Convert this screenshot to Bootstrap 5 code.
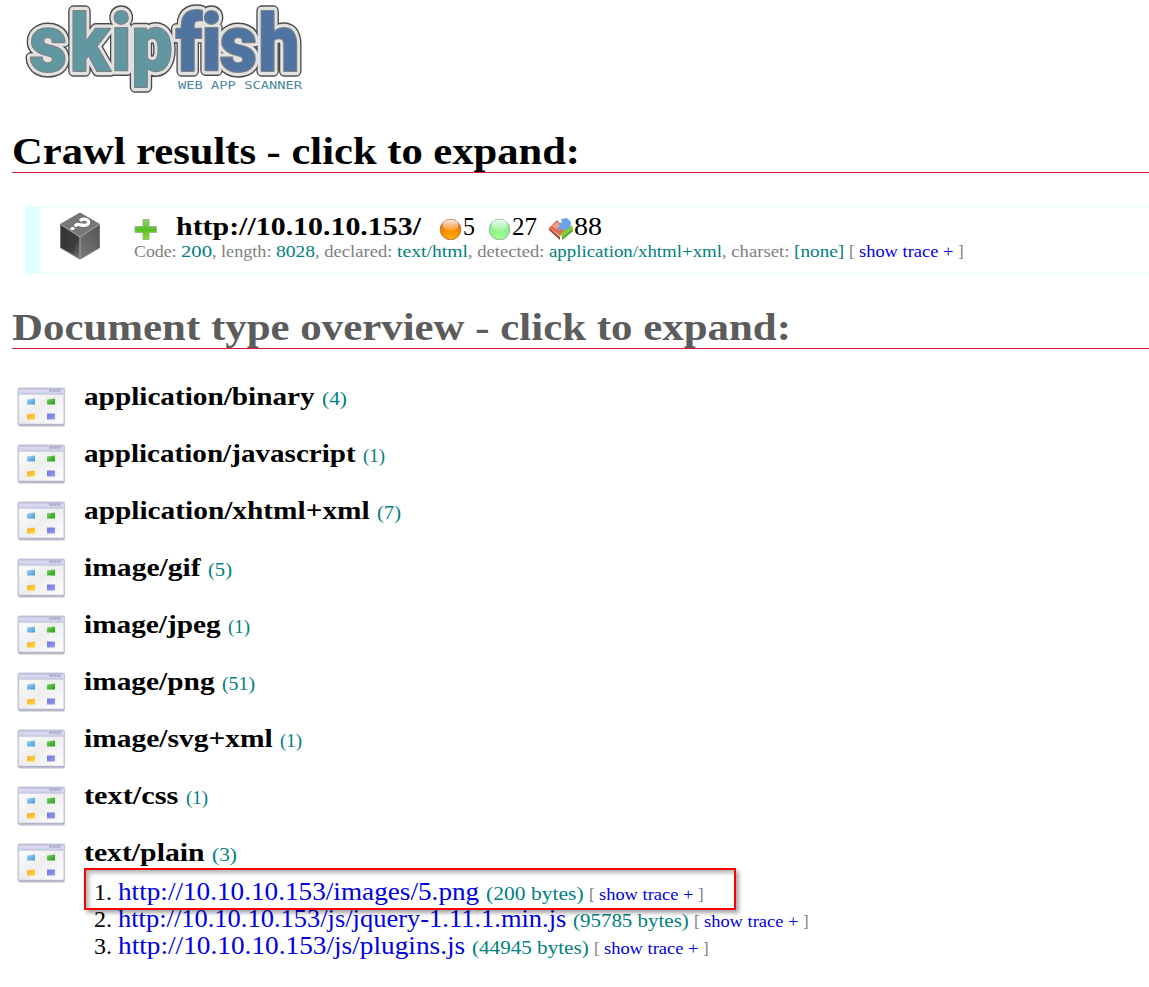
<!DOCTYPE html>
<html lang="en">
<head>
<meta charset="utf-8">
<title>Skipfish - scan results browser</title>
<link href="https://cdn.jsdelivr.net/npm/bootstrap@5.3.0/dist/css/bootstrap.min.css" rel="stylesheet">
<style>
body{font-family:Georgia,"Liberation Serif",serif;color:#000;background:#fff;overflow:hidden}
.fit{white-space:pre;display:inline-block;flex:none;transform-origin:0 50%}
.logo{display:block;margin-left:20px;overflow:visible}
.sect{font-size:37.5px;line-height:41px;height:42px;font-weight:700;margin:0 0 0 12px;border-bottom:1px solid crimson}
.sect.dim{color:#5c5c5c}
.target{margin:33px 0 0 25px;height:68px;border:1px solid #e0ffff;border-left-width:15px;border-right:0;padding:4px 0 0 18px}
.target-body{margin-left:32px}
.target-line{height:29px;line-height:31px;font-size:25px}
.meta{font-size:17px;line-height:22px;color:gray;margin-top:1px}
.val{color:teal}
.lnk{color:#0000e0;text-decoration:none}
.mime{height:57px;padding-left:17px}
.mime>svg{margin-top:5px;flex:none}
.mime-name{font-size:25px;line-height:30px;margin-left:18px}
.cnt{font-size:19px;color:teal}
.trace{font-size:17px;color:gray}
.docs{margin:-17px 0 0 84px}
.docs .doc{height:27px;line-height:27px;font-size:25px}
.num{width:28px;margin-right:6px;text-align:right;flex:none;font-size:24px}
.trace-link{font-size:17px}
.hl{left:0;top:-10px;width:652px;height:42px;z-index:2;border:2px solid #f00;box-shadow:3px 3px 4px rgba(0,0,0,.35),inset 3px 3px 4px rgba(0,0,0,.3)}
</style>
<script src="https://cdn.jsdelivr.net/npm/bootstrap@5.3.0/dist/js/bootstrap.bundle.min.js"></script>
</head>
<body>
<svg width="0" height="0" class="position-absolute" aria-hidden="true">
  <defs>
    <linearGradient id="pane" x1="0" y1="0" x2="1" y2="1"><stop offset="0" stop-color="#fff"/><stop offset=".5" stop-color="#eee"/><stop offset="1" stop-color="#fff"/></linearGradient>
    <linearGradient id="bar" x1="0" y1="0" x2="0" y2="1"><stop offset="0" stop-color="#b9b9d6"/><stop offset=".4" stop-color="#dcdcf4"/><stop offset="1" stop-color="#c3c3df"/></linearGradient>
    <linearGradient id="b1" x1="0" y1="0" x2="1" y2="1"><stop offset="0" stop-color="#a6d8f4"/><stop offset="1" stop-color="#3f97d6"/></linearGradient>
    <linearGradient id="b2" x1="0" y1="0" x2="1" y2="1"><stop offset="0" stop-color="#7ace68"/><stop offset="1" stop-color="#23a010"/></linearGradient>
    <linearGradient id="b3" x1="0" y1="0" x2="1" y2="1"><stop offset="0" stop-color="#f7a63a"/><stop offset="1" stop-color="#ffdc2c"/></linearGradient>
    <linearGradient id="b4" x1="0" y1="0" x2="1" y2="1"><stop offset="0" stop-color="#6c78d8"/><stop offset="1" stop-color="#9c9cf0"/></linearGradient>
    <symbol id="win" viewBox="0 0 49 41">
      <rect x="1.500" y="2" width="46.500" height="38" rx="2" fill="#777" opacity=".25"/>
      <rect x="1.300" y="1.300" width="46" height="37" rx="1.500" fill="url(#pane)" stroke="#c6c6d8" stroke-width="1.600"/>
      <rect x="2" y="1.300" width="44.600" height="6.400" fill="url(#bar)"/>
      <path d="M32 3.500h12" stroke="#b0b0d0" stroke-width="2.600" stroke-dasharray="3.500 .3"/>
      <path d="M2 37.600h45" stroke="#b2b2c8" stroke-width="1.600"/>
      <g><path d="M10 12.500l8-1v6h-8z" fill="url(#b1)"/><path d="M30 12.500l8-1v6h-8z" fill="url(#b2)"/><path d="M10 27.500l8-1v6h-8z" fill="url(#b3)"/><path d="M30 26.500h8v6h-8z" fill="url(#b4)"/></g>
    </symbol>
  </defs>
</svg>

<header>
<svg class="logo" width="300" height="100" viewBox="20 0 300 100">
  <defs>
    <g id="word" font-family="Roboto" font-weight="900" font-size="79"><text id="skip" x="32 76 121 143" y="71">skip</text><text id="fish" x="191 219 239 281" y="71">fish</text></g>
  </defs>
  <g transform="scale(.92 1)" stroke-linejoin="round">
    <use href="#word" fill="#4a4a4a" stroke="#4a4a4a" stroke-width="11.500"/>
    <use href="#word" fill="#e2e2e2" stroke="#e2e2e2" stroke-width="8.500"/>
    <use href="#word" fill="#777" stroke="#808080" stroke-width="2.200"/>
    <use href="#skip" font-family="Roboto" font-weight="900" font-size="79" fill="#6197a0"/>
    <use href="#fish" font-family="Roboto" font-weight="900" font-size="79" fill="#5074a2"/>
  </g>
  <text x="178" y="89" font-family="DejaVu Sans Mono" font-weight="400" font-size="10" textLength="124" lengthAdjust="spacingAndGlyphs" fill="#4b879d">WEB APP SCANNER</text>
</svg>
</header>

<h2 class="sect" style="margin-top:31px"><span class="fit" data-w="568">Crawl results - click to expand:</span></h2>

<section class="target d-flex">
  <svg width="44" height="50" viewBox="0 0 44 50" class="flex-shrink-0">
    <defs><linearGradient id="c1" x1="0" y1="0" x2="1" y2="1"><stop offset="0" stop-color="#333"/><stop offset=".65" stop-color="#3c3c3c"/><stop offset="1" stop-color="#777"/></linearGradient><linearGradient id="c2" x1="1" y1="0" x2="0" y2="1"><stop offset="0" stop-color="#555"/><stop offset="1" stop-color="#777"/></linearGradient></defs>
    <path d="M22 2.500L41 13.500v23L22 47.500 3 36.500v-23z" fill="#555" stroke="#777" stroke-width="2" stroke-linejoin="round"/>
    <path d="M22 2.500L41 13.500 22 26 3 13.500z" fill="#777"/>
    <path d="M3 14l19 12v21L3 36.500z" fill="url(#c1)"/><path d="M41 14L22 26v21l19-10.500z" fill="url(#c2)"/>
    <path d="M3 13.500L22 26l19-12.500M22 26v21" fill="none" stroke="#999" stroke-width="1.300"/>
    <path d="M22 10c3-3.500 9.500-1.500 8.500 2-1.500 4-6.500 2-9.500 1.500-2.500-.3-3.500 1-4 2" fill="none" stroke="#fff" stroke-width="3.200"/><ellipse cx="14.500" cy="17.500" rx="2.300" ry="1.600" fill="#fff"/>
  </svg>
  <div class="target-body">
    <div class="target-line d-flex">
      <svg width="42" height="29" viewBox="0 0 42 29" class="flex-shrink-0"><defs><linearGradient id="pl" x1="0" y1="0" x2="0" y2="1"><stop offset="0" stop-color="#8cd668"/><stop offset=".5" stop-color="#58be28"/><stop offset="1" stop-color="#8ce01c"/></linearGradient></defs><path d="M9 8.500h6v7h7.500v6H15v7H9v-7H1v-6h8z" fill="url(#pl)" stroke="#90b888" stroke-width="1"/></svg>
      <b class="fit" data-w="262" data-pad="17">http://10.10.10.153/</b>
      <svg width="25" height="29" viewBox="0 0 25 29" class="flex-shrink-0"><defs><radialGradient id="or" cx=".5" cy=".95" r=".9"><stop offset="0" stop-color="#ffb000"/><stop offset=".7" stop-color="#f78000"/><stop offset="1" stop-color="#d85a10"/></radialGradient><linearGradient id="sh" x1="0" y1="0" x2="0" y2="1"><stop offset="0" stop-color="#fff" stop-opacity=".9"/><stop offset="1" stop-color="#fff" stop-opacity=".15"/></linearGradient></defs><circle cx="12.500" cy="18.500" r="10.300" fill="url(#or)" stroke="#b87850"/><ellipse cx="12.500" cy="14" rx="8" ry="5.500" fill="url(#sh)"/></svg>
      <span class="fit" data-w="24" data-pad="12">5</span>
      <svg width="25" height="29" viewBox="0 0 25 29" class="flex-shrink-0"><defs><radialGradient id="gr" cx=".5" cy=".9" r=".9"><stop offset="0" stop-color="#a4ff90"/><stop offset="1" stop-color="#7de48c"/></radialGradient></defs><circle cx="12.500" cy="18.500" r="10.300" fill="url(#gr)" stroke="#90b890"/><ellipse cx="12.500" cy="14" rx="8" ry="5.500" fill="url(#sh)"/></svg>
      <span class="fit" data-w="36" data-pad="11">27</span>
      <svg width="26" height="29" viewBox="0 0 26 29" class="flex-shrink-0"><path d="M1 17l8-8 9 10-6 6z" fill="#e76c50"/><path d="M1 17l11 9v3L1 19z" fill="#9c3d34"/><path d="M10 13l4-2-1-3 6-1 4 4-1 7-5 2-4-2-3 2z" fill="#6ba2ea"/><path d="M13 23l4-5 2 1 5-5 1 4-11 10z" fill="#80d038"/><path d="M14 27l11-9v2L14 29z" fill="#479921"/><path d="M4 15l5-4 3 4-4 3z" fill="#f2a08c"/></svg>
      <span class="fit" data-w="28">88</span>
    </div>
    <div class="meta d-flex"><span class="fit" data-w="47">Code: </span><span class="fit val" data-w="31">200</span><span class="fit" data-w="64">, length: </span><span class="fit val" data-w="39">8028</span><span class="fit" data-w="82">, declared: </span><span class="fit val" data-w="71">text/html</span><span class="fit" data-w="81">, detected: </span><span class="fit val" data-w="173">application/xhtml+xml</span><span class="fit" data-w="72">, charset: </span><span class="fit val" data-w="55">[none] </span><span class="fit" data-w="10">[ </span><a class="fit lnk" data-w="99">show trace + </a><span class="fit">]</span></div>
  </div>
</section>

<h2 class="sect dim" style="margin-top:33px"><span class="fit" data-w="779">Document type overview - click to expand:</span></h2>

<main style="margin-top:33px">
  <div id="types"></div>
  <div class="docs position-relative" id="docs"><div class="hl position-absolute"></div></div>
</main>

<script>
const types=[["application/binary",4,238,25],["application/javascript",1,279,22],["application/xhtml+xml",7,293,24],["image/gif",5,124,24],["image/jpeg",1,144,22],["image/png",51,138,33],["image/svg+xml",1,196,22],["text/css",1,102,22],["text/plain",3,128,25]];
document.getElementById("types").innerHTML=types.map(t=>`<div class="mime d-flex"><svg width="49" height="41"><use href="#win"/></svg><div class="mime-name d-flex align-items-baseline"><b class="fit" data-w="${t[2]}">${t[0]} </b><span class="fit cnt" data-w="${t[3]}">(${t[1]})</span></div></div>`).join("");
const docs=[["images/5.png",200,368,103],["js/jquery-1.11.1.min.js",95785,455,121],["js/plugins.js",44945,354,122]];
document.getElementById("docs").insertAdjacentHTML("beforeend",docs.map((d,i)=>`<div class="doc d-flex align-items-baseline"><span class="num">${i+1}.</span><a class="fit lnk" data-w="${d[2]}">http://10.10.10.153/${d[0]} </a><span class="fit cnt" data-w="${d[3]}">(${d[1]} bytes) </span><span class="fit trace" data-w="10">[ </span><a class="fit lnk trace-link" data-w="99">show trace + </a><span class="trace">]</span></div>`).join(""));
// widen each run of text to its column width; data-pad is blank space after it
document.querySelectorAll("[data-w]").forEach(e=>{
  const natural=e.getBoundingClientRect().width, target=e.dataset.w-(e.dataset.pad||0);
  e.style.transform=`scaleX(${target/natural})`;
  e.style.marginRight=e.dataset.w-natural+"px";
});
</script>
</body>
</html>
